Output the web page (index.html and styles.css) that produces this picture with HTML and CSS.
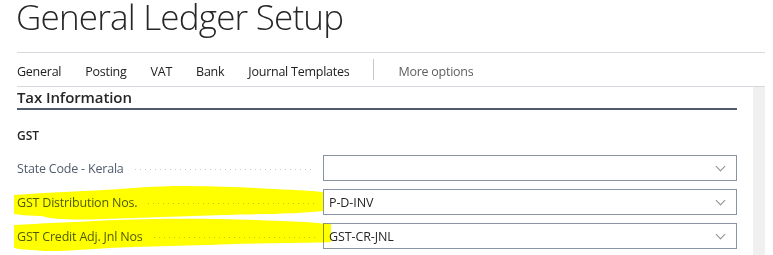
FILE: index.html
```html
<!DOCTYPE html>
<html lang="en">
<head>
    <meta charset="UTF-8">
    <title>General Ledger Setup</title>
    <link rel="stylesheet" href="styles.css">
</head>
<body>
    <h1 class="page-title">General Ledger Setup</h1>

    <nav class="tabs">
        <a class="tab">General</a>
        <a class="tab">Posting</a>
        <a class="tab">VAT</a>
        <a class="tab">Bank</a>
        <a class="tab">Journal Templates</a>
        <span class="tab-divider"></span>
        <a class="tab tab-more">More options</a>
    </nav>

    <div class="page-body">
        <div class="content">
            <h2 class="section-title">Tax Information</h2>
            <h3 class="group-title">GST</h3>

            <div class="field-row">
                <label class="field-label"><span>State Code - Kerala</span><i class="leader"></i></label>
                <div class="field-input"><span class="field-value"></span><span class="chevron"></span></div>
            </div>

            <div class="field-row">
                <label class="field-label"><span>GST Distribution Nos.</span><i class="leader"></i></label>
                <div class="field-input"><span class="field-value">P-D-INV</span><span class="chevron"></span></div>
                <svg class="marker" width="320" height="40" viewBox="0 0 320 40">
                    <path d="M0 10 C40 7 80 6 120 3 C170 -1 220 2 260 4 C285 5 300 6 309 7 L309 26 C280 29 250 29 210 30 C170 31 130 33 90 34 C60 35 40 35 28 31 C18 31 6 30 0 29 Z"/>
                </svg>
            </div>

            <div class="field-row">
                <label class="field-label"><span>GST Credit Adj. Jnl Nos</span><i class="leader"></i></label>
                <div class="field-input"><span class="field-value">GST-CR-JNL</span><span class="chevron"></span></div>
                <svg class="marker marker-last" width="330" height="40" viewBox="0 0 330 40">
                    <path d="M0 7 C40 5 90 2 140 1 C190 0 250 2 290 4 C305 5 312 6 317 6 L317 24 C300 25 260 25 220 26 C170 28 120 28 80 31 C50 33 30 34 20 32 C10 32 4 31 0 30 Z"/>
                </svg>
            </div>
        </div>
        <div class="scrollbar"></div>
    </div>
</body>
</html>
```

FILE: styles.css
```css
* {
    margin: 0;
    padding: 0;
    box-sizing: border-box;
}

:root {
    --text: #212121;
    --text-muted: #505c6d;
    --line: #d5d8dd;
    --border: #8a95a3;
    --scroll: #f0f0f0;
}

body {
    font-family: "Open Sans", "Noto Sans", sans-serif;
    background: #ffffff;
    color: var(--text);
    padding: 0 8px 0 17px;
    overflow: hidden;
}

.page-title {
    font-size: 35px;
    font-weight: 300;
    color: #262626;
    line-height: 33px;
    height: 52px;
    letter-spacing: -0.8px;
    margin-left: -1px;
}

/* Barra de abas */
.tabs {
    display: flex;
    align-items: center;
    height: 35px;
    padding-top: 3px;
    border-top: 1px solid var(--line);
    border-bottom: 1px solid var(--line);
}

.tab {
    font-size: 12.5px;
    color: var(--text);
    margin-right: 24px;
    letter-spacing: -0.25px;
}

.tab-divider {
    width: 1px;
    height: 21px;
    margin-top: -3px;
    background: #c8c8c8;
    margin-right: 24px;
}

.tab-more {
    color: #5f5f5f;
}

.page-body {
    display: flex;
    height: 170px;
}

.content {
    flex: 1;
    padding-right: 16px;
}

.scrollbar {
    width: 12px;
    background: var(--scroll);
}

.section-title {
    font-size: 15px;
    font-weight: 600;
    color: #262626;
    line-height: 20px;
    height: 23px;
    border-bottom: 2px solid var(--text-muted);
    letter-spacing: -0.1px;
}

.group-title {
    font-size: 12px;
    font-weight: 600;
    color: #262626;
    margin-top: 17px;
    line-height: 17px;
    margin-bottom: 11px;
}

/* Linhas do formulário */
.field-row {
    position: relative;
    display: flex;
    align-items: center;
    margin-bottom: 8px;
}

.field-label {
    display: flex;
    align-items: center;
    width: 306px;
    font-size: 12.5px;
    color: var(--text-muted);
    letter-spacing: -0.2px;
    white-space: nowrap;
}

.leader {
    flex: 1;
    height: 1px;
    margin: 3px 8px 0 11px;
    background-image: linear-gradient(to right, #c4c8cd 1px, transparent 1px);
    background-size: 5px 1px;
    background-repeat: repeat-x;
}

.field-input {
    flex: 1;
    display: flex;
    align-items: center;
    height: 26px;
    border: 1px solid var(--border);
    background: #ffffff;
    padding: 0 12px 0 5px;
}

.field-value {
    flex: 1;
    font-size: 12.5px;
    color: #262626;
    letter-spacing: -0.1px;
}

.chevron {
    width: 7px;
    height: 7px;
    border-right: 1px solid #8f8f8f;
    border-bottom: 1px solid #8f8f8f;
    transform: rotate(45deg);
    margin-top: -4px;
}

/* Marcação amarela */
.marker {
    position: absolute;
    left: -3px;
    top: -4px;
    fill: #ffff00;
    mix-blend-mode: multiply;
    pointer-events: none;
}

.marker-last {
    top: -5px;
}
```
